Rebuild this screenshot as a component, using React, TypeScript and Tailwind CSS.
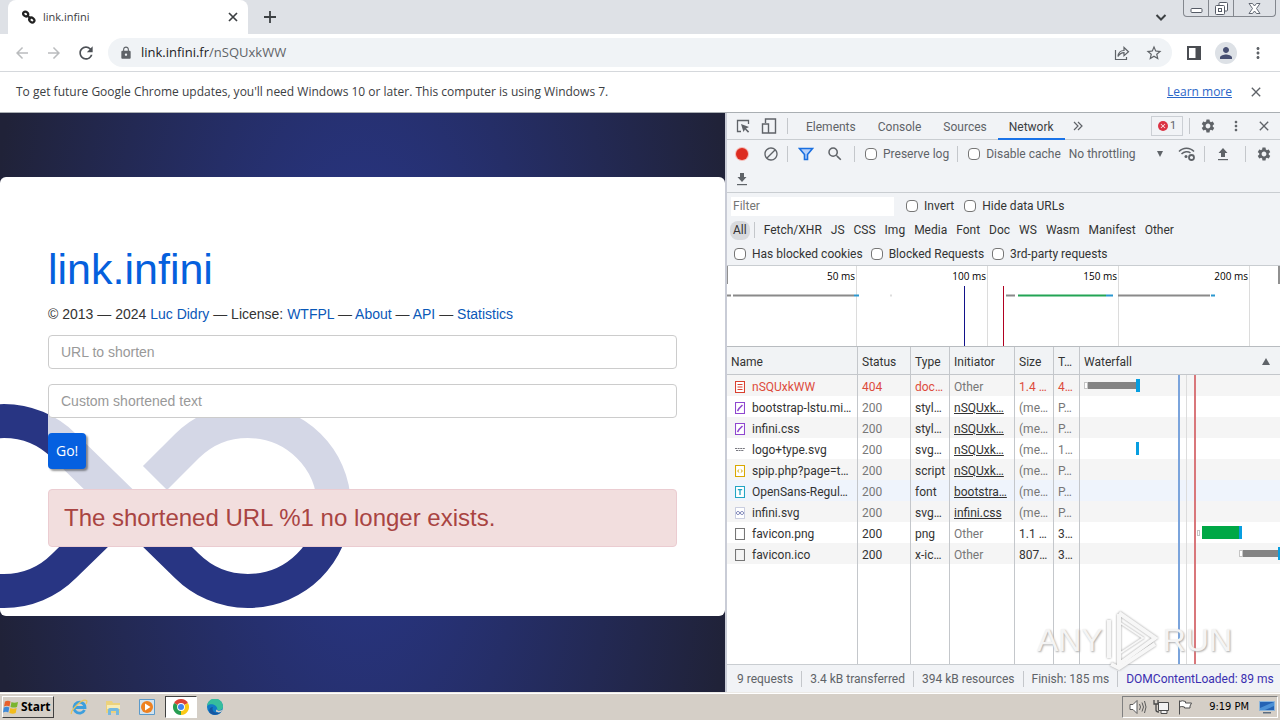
import { useState, type ReactNode } from "react";
import clsx from "clsx";
import {
  MdArrowBack,
  MdArrowForward,
  MdBlock,
  MdClose,
  MdLock,
  MdMoreVert,
  MdPerson,
  MdRefresh,
  MdSearch,
  MdSettings,
  MdStarBorder,
} from "react-icons/md";

type IconKind = "doc" | "css" | "logo" | "script" | "font" | "svg" | "blank";

type Bar = { start: number; wait: number; download: number; receiving?: boolean };

type RequestRow = {
  name: string;
  kind: IconKind;
  status: string;
  type: string;
  initiator: string;
  linked: boolean;
  size: string;
  time: string;
  dim: boolean;
  bar?: Bar;
};

const REQUESTS: RequestRow[] = [
  { name: "nSQUxkWW", kind: "doc", status: "404", type: "doc…", initiator: "Other", linked: false, size: "1.4 …", time: "4…", dim: false, bar: { start: 4, wait: 52, download: 4 } },
  { name: "bootstrap-lstu.mi…", kind: "css", status: "200", type: "styl…", initiator: "nSQUxk…", linked: true, size: "(me…", time: "P…", dim: true },
  { name: "infini.css", kind: "css", status: "200", type: "styl…", initiator: "nSQUxk…", linked: true, size: "(me…", time: "P…", dim: true },
  { name: "logo+type.svg", kind: "logo", status: "200", type: "svg…", initiator: "nSQUxk…", linked: true, size: "(me…", time: "1…", dim: true, bar: { start: 56, wait: 0, download: 3 } },
  { name: "spip.php?page=t…", kind: "script", status: "200", type: "script", initiator: "nSQUxk…", linked: true, size: "(me…", time: "P…", dim: true },
  { name: "OpenSans-Regul…", kind: "font", status: "200", type: "font", initiator: "bootstra…", linked: true, size: "(me…", time: "P…", dim: true },
  { name: "infini.svg", kind: "svg", status: "200", type: "svg…", initiator: "infini.css", linked: true, size: "(me…", time: "P…", dim: true },
  { name: "favicon.png", kind: "blank", status: "200", type: "png", initiator: "Other", linked: false, size: "1.1 …", time: "3…", dim: false, bar: { start: 117, wait: 41, download: 3, receiving: true } },
  { name: "favicon.ico", kind: "blank", status: "200", type: "x-ic…", initiator: "Other", linked: false, size: "807…", time: "3…", dim: false, bar: { start: 159, wait: 39, download: 3 } },
];

const TYPES = ["Fetch/XHR", "JS", "CSS", "Img", "Media", "Font", "Doc", "WS", "Wasm", "Manifest", "Other"];

const cellCls = "whitespace-nowrap border-r border-[#c4c7cb] pt-0.5 pl-1 text-left font-normal";

function Check({ label }: { label: string }) {
  return (
    <label className="flex items-center gap-1.5 whitespace-nowrap">
      <input type="checkbox" className="size-3 appearance-none rounded-sm border border-[#767676] bg-white checked:bg-[#1a73e8]" />
      {label}
    </label>
  );
}

function IconButton({ label, className, children }: { label: string; className?: string; children: ReactNode }) {
  return (
    <button type="button" aria-label={label} className={clsx("flex shrink-0 items-center justify-center", className)}>
      {children}
    </button>
  );
}

function Divider() {
  return <span className="h-4 w-px shrink-0 bg-[#c4c7cb]" />;
}

function ArrowTray({ up }: { up?: boolean }) {
  return (
    <svg viewBox="0 0 12 14" className="h-3.5 w-3" fill="#5f6368">
      {up ? <path d="M6 1l4.500 5H8v4H4V6H1.500z" /> : <path d="M6 10L1.500 5H4V1h4v4h2.500z" />}
      <path d="M1 12h10v1.200H1z" />
    </svg>
  );
}

function FileIcon({ kind }: { kind: IconKind }) {
  if (kind === "logo") {
    return (
      <svg viewBox="0 0 10 12" className="h-3 w-2.5 shrink-0" fill="none" stroke="#77777f">
        <path d="M0 4.500h10M1 6.500h8" strokeDasharray="2 .6" strokeWidth="1.200" />
      </svg>
    );
  }
  const stroke = { doc: "#d9402f", css: "#8f47cf", script: "#d9a800", font: "#22a5c4", svg: "#a9b0cf", blank: "#767676" }[kind];
  return (
    <svg viewBox="0 0 10 12" className="h-3 w-2.5 shrink-0" fill="none" stroke={stroke}>
      <path d="M.5.5h9v11h-9z" fill={kind === "blank" ? "none" : "#fff"} strokeWidth={kind === "svg" ? 0.6 : 1.1} />
      {kind === "doc" && <path d="M2.500 3.500h5M2.500 6h5M2.500 8.500h5" />}
      {kind === "css" && <path d="M2.500 9l1.500-2.500L7.500 3" strokeWidth="1.500" />}
      {kind === "script" && <path d="M4.200 4.500L2.500 6l1.700 1.500M5.800 4.500L7.500 6 5.800 7.500" />}
      {kind === "font" && <path d="M2.800 3.700h4.400M5 3.700V9" strokeWidth="1.300" />}
      {kind === "svg" && <path d="M5 6c-1-2-3.500-2-3.500 0s2.500 2 3.500 0 3.500-2 3.500 0-2.500 2-3.500 0z" stroke="#5c66a5" strokeWidth=".9" />}
    </svg>
  );
}

function TabStrip() {
  return (
    <div className="flex h-[34px] shrink-0 items-start bg-[#dee1e6] pl-2">
      <div className="flex h-full w-60 items-center rounded-t-lg bg-white pr-2.5 pl-3.5">
        <svg viewBox="0 0 14 14" className="size-3.5 shrink-0" fill="none" stroke="#222" strokeWidth="2.200">
          <ellipse cx="3.700" cy="4" rx="2.600" ry="2.200" transform="rotate(40 3.700 4)" />
          <ellipse cx="9.800" cy="10" rx="2.800" ry="2.200" transform="rotate(40 9.800 10)" />
          <path d="M5 5l4 4" />
        </svg>
        <span className="ml-[7px] flex-1 text-[11px] text-[#3c4043]">link.infini</span>
        <IconButton label="Close tab">
          <svg viewBox="0 0 10 10" className="size-2.5" stroke="#3c4043" strokeWidth="1.700"><path d="M1 1l8 8M9 1L1 9" /></svg>
        </IconButton>
      </div>
      <IconButton label="New tab" className="h-full w-11">
        <svg viewBox="0 0 12 12" className="size-3" stroke="#3c4043" strokeWidth="1.800"><path d="M6 0v12M0 6h12" /></svg>
      </IconButton>
      <div className="flex-1" />
      <IconButton label="Search tabs" className="h-full w-11">
        <svg viewBox="0 0 12 12" className="size-3" fill="none" stroke="#3c4043" strokeWidth="2"><path d="M1.500 4L6 8.500 10.500 4" /></svg>
      </IconButton>
      <div className="mr-1 flex h-[17px] w-[93px] overflow-hidden rounded-b border border-t-0 border-[#83878e]">
        <IconButton label="Minimize" className="w-[25px] border-r border-[#83878e]">
          <svg viewBox="0 0 13 13" className="size-[13px]" fill="#fff" stroke="#555b66"><rect x="1" y="6.500" width="11" height="4" rx="1" /></svg>
        </IconButton>
        <IconButton label="Restore" className="w-[25px] border-r border-[#83878e]">
          <svg viewBox="0 0 13 13" className="size-[13px]" fill="#fff" stroke="#555b66"><rect x="4" y=".5" width="8.500" height="8.500" rx="1" /><rect x=".5" y="3.500" width="9" height="9" rx="1" /><rect x="3.500" y="6.500" width="3" height="3" /></svg>
        </IconButton>
        <IconButton label="Close" className="flex-1">
          <svg viewBox="0 0 13 11" className="h-[11px] w-[13px]" fill="#fff" stroke="#555b66" strokeWidth=".9"><path d="M1 .5h3.500l2 2.500 2-2.500H12L8.500 5.500 12 10.500H8.500l-2-2.500-2 2.500H1l3.500-5z" /></svg>
        </IconButton>
      </div>
    </div>
  );
}

function AddressBar() {
  return (
    <div className="flex h-[38px] shrink-0 items-center border-b border-[#d5d8dc] bg-white pr-1.5 pl-1.5 text-[#5f6368]">
      <IconButton label="Back" className="size-8"><MdArrowBack className="size-[18px] text-[#babcbe]" /></IconButton>
      <IconButton label="Forward" className="size-8"><MdArrowForward className="size-[18px] text-[#babcbe]" /></IconButton>
      <IconButton label="Reload" className="size-8"><MdRefresh className="size-5 text-[#4d5156]" /></IconButton>
      <div className="ml-1.5 flex h-[29px] min-w-0 flex-1 items-center rounded-full bg-[#f0f3f6] pr-0.5 pl-[11px]">
        <MdLock className="size-3.5 shrink-0" />
        <div className="ml-2 flex-1 text-[13px]">
          <span className="text-[#202124]">link.infini.fr</span>/nSQUxkWW
        </div>
        <IconButton label="Share" className="size-8">
          <svg viewBox="0 0 16 16" className="size-4" fill="none" stroke="#5f6368" strokeWidth="1.200"><path d="M1.500 5v9.500h11V12M4 11.500C4.300 8 6 5.500 10 5.500V2.500l4.500 4.200-4.500 4v-3C7.500 7.700 5.500 9 4 11.500z" /></svg>
        </IconButton>
        <IconButton label="Bookmark" className="size-8"><MdStarBorder className="size-[18px]" /></IconButton>
      </div>
      <IconButton label="Side panel" className="ml-1.5 size-8">
        <svg viewBox="0 0 14 14" className="size-3.5" fill="#4a4d52"><path d="M0 0h14v14H0zM2 2v10h6.500V2z" fillRule="evenodd" /></svg>
      </IconButton>
      <IconButton label="Profile" className="size-8">
        <span className="flex size-[22px] items-center justify-center rounded-full bg-[#dde1e6]"><MdPerson className="size-[18px] text-[#474f72]" /></span>
      </IconButton>
      <IconButton label="Menu" className="size-8"><MdMoreVert className="size-[18px]" /></IconButton>
    </div>
  );
}

function InfoBar() {
  return (
    <div className="flex h-[41px] shrink-0 items-center border-b border-[#aaafb3] bg-white pr-4 pl-4 text-[12px] text-[#3c4043]">
      <p className="flex-1 whitespace-nowrap">To get future Google Chrome updates, you'll need Windows 10 or later. This computer is using Windows 7.</p>
      <a href="#learn" className="text-[#2a66c8] underline">Learn more</a>
      <IconButton label="Dismiss" className="ml-4"><MdClose className="size-4 text-[#5f6368]" /></IconButton>
    </div>
  );
}

function Infinity() {
  return (
    <svg viewBox="0 0 352 206" className="absolute bottom-[7px] left-0 h-[206px] w-[352px]" fill="none" stroke="#283583" strokeWidth="34">
      <path d="M-10 19.500Q0 18 4 18A85 85 0 0 1 64 43L187 163A86 85 0 1 0 187 43L155 75" />
      <path d="M-10 188H4A85 85 0 0 0 64 163L104 124" />
    </svg>
  );
}

function WebPage() {
  const inputCls = "h-[34px] w-full rounded border border-[#ccc] bg-white px-3 text-sm text-[#555] placeholder:text-[#999] focus:outline-none";
  return (
    <main className="min-w-0 flex-1 bg-[radial-gradient(ellipse_52%_150%_at_center,#283583_15%,#202238_100%)] pt-16 font-['Liberation_Sans',Arial,sans-serif]">
      <div className="relative overflow-hidden rounded-md bg-white px-12 pt-16 pb-[69px]">
        <Infinity />
        <div className="relative">
          <div className="bg-white/80">
            <h1 className="text-[43px] leading-[56px] text-[#0560dd]">link.infini</h1>
            <p className="pt-2 pb-3 text-sm leading-[18px] text-[#333]">
              © 2013 — 2024 <a href="#luc" className="text-[#0a58b8]">Luc Didry</a> — License: <a href="#wtfpl" className="text-[#0a58b8]">WTFPL</a> — <a href="#about" className="text-[#0a58b8]">About</a> — <a href="#api" className="text-[#0a58b8]">API</a> — <a href="#stats" className="text-[#0a58b8]">Statistics</a>
            </p>
            <form className="flex flex-col items-start gap-[15px] pb-5" onSubmit={(e) => e.preventDefault()}>
              <input aria-label="URL to shorten" placeholder="URL to shorten" className={inputCls} />
              <input aria-label="Custom shortened text" placeholder="Custom shortened text" className={inputCls} />
              <button type="submit" className="h-9 rounded bg-[#0560e0] px-2 font-['Open_Sans',sans-serif] text-sm text-white shadow-[2px_2px_2px_#00000066]">Go!</button>
            </form>
          </div>
          <div role="alert" className="rounded border border-[#ebccd1] bg-[#f2dede] px-[15px] py-[13px] text-2xl leading-[30px] text-[#a94442]">
            The shortened URL %1 no longer exists.
          </div>
        </div>
      </div>
    </main>
  );
}

function DevtoolsTabs() {
  const [active, setActive] = useState("Network");
  return (
    <div className="flex h-[27px] shrink-0 items-center border-b border-[#c9cdd1] pr-2 pl-2 text-[#5f6368]">
      <IconButton label="Inspect" className="size-4">
        <svg viewBox="0 0 16 16" className="size-4" fill="none" stroke="#5f6368" strokeWidth="1.300"><path d="M6 13.500H2.500v-11h11V6" /><path d="M6 6l8 3-3 1.500 3.200 3-1.200 1.200-3-3.200L8.500 14z" fill="#5f6368" stroke="none" /></svg>
      </IconButton>
      <IconButton label="Device toolbar" className="mr-2.5 ml-2.5 size-4">
        <svg viewBox="0 0 16 16" className="size-4" fill="none" stroke="#5f6368" strokeWidth="1.400"><path d="M4.500 5V1h10v14H8" /><path d="M1.500 6h6v9h-6z" /></svg>
      </IconButton>
      <Divider />
      <div className="ml-[7px] flex h-full">
        {["Elements", "Console", "Sources", "Network"].map((tab) => (
          <button
            key={tab}
            type="button"
            onClick={() => setActive(tab)}
            className={clsx("h-[27px] border-b-2 px-[11px] pt-0.5", active === tab ? "border-[#1a73e8] text-[#3c4043]" : "border-transparent")}
          >
            {tab}
          </button>
        ))}
      </div>
      <IconButton label="More tabs" className="ml-2">
        <svg viewBox="0 0 10 10" className="size-2.5" fill="none" stroke="#5f6368" strokeWidth="1.200"><path d="M1 1l4 4-4 4M5 1l4 4-4 4" /></svg>
      </IconButton>
      <div className="flex-1" />
      <button type="button" className="mr-1.5 flex h-5 w-8 items-center justify-center gap-0.5 border border-[#cbcfd4] text-[11px]">
        <span className="flex size-2.5 items-center justify-center rounded-full bg-[#db3344] text-white"><MdClose className="size-2" /></span>1
      </button>
      <Divider />
      <IconButton label="Settings" className="ml-2.5"><MdSettings className="size-4" /></IconButton>
      <IconButton label="Customize" className="ml-3"><MdMoreVert className="size-4" /></IconButton>
      <IconButton label="Close DevTools" className="ml-3"><MdClose className="size-4" /></IconButton>
    </div>
  );
}

function NetworkToolbar() {
  return (
    <div className="shrink-0 border-b border-[#c9cdd1] text-[#5f6368]">
      <div className="flex h-[26px] items-center pt-px pr-2 pl-2">
        <IconButton label="Record" className="size-3.5"><span className="size-3 rounded-full bg-[#dd2c20] ring-1 ring-[#f4b9b4]" /></IconButton>
        <IconButton label="Clear" className="mr-2 ml-3.5">
          <MdBlock className="size-4" />
        </IconButton>
        <Divider />
        <IconButton label="Filter" className="mr-3 ml-2.5">
          <svg viewBox="0 0 16 14" className="h-3.5 w-4" fill="#b7d1fa" stroke="#1a6fe0" strokeWidth="1.600"><path d="M1.500 1.500h13L9.500 7.500v5h-3v-5z" /></svg>
        </IconButton>
        <IconButton label="Search" className="mr-2.5"><MdSearch className="size-[18px]" /></IconButton>
        <Divider />
        <div className="mr-2 ml-2.5"><Check label="Preserve log" /></div>
        <Divider />
        <div className="ml-2.5"><Check label="Disable cache" /></div>
        <label className="relative ml-2 flex items-center">
          <span className="sr-only">Throttling</span>
          <select className="w-[95px] appearance-none bg-transparent">
            <option>No throttling</option>
          </select>
          <svg viewBox="0 0 8 6" className="pointer-events-none absolute right-0 h-1.5 w-2" fill="#5f6368"><path d="M1 0h6L4 6z" /></svg>
        </label>
        <IconButton label="Network conditions" className="ml-3.5">
          <svg viewBox="0 0 18 16" className="h-4 w-[18px]" fill="none" stroke="#5f6368" strokeWidth="1.500"><path d="M1 5.500C5 1 12 1 16 5.500M3.500 8C6 5.500 10 5 12.500 7" /><circle cx="8" cy="10.500" r="1.500" fill="#5f6368" stroke="none" /><circle cx="13.500" cy="11.500" r="2.500" strokeWidth="1.800" /></svg>
        </IconButton>
        <div className="flex-1" />
        <Divider />
        <IconButton label="Import HAR" className="mr-4 ml-3"><ArrowTray up /></IconButton>
        <Divider />
        <IconButton label="Network settings" className="ml-2.5"><MdSettings className="size-4" /></IconButton>
      </div>
      <div className="flex h-[26px] items-center pl-[9px]">
        <IconButton label="Export HAR"><ArrowTray /></IconButton>
      </div>
    </div>
  );
}

function FilterBar() {
  return (
    <div className="shrink-0 border-b border-[#c9cdd1] text-[#333]">
      <div className="flex h-6 items-center gap-2.5 pt-0.5 pl-1">
        <input aria-label="Filter" placeholder="Filter" className="mr-0.5 h-[19px] w-[163px] bg-white px-0.5 placeholder:text-[#757575] focus:outline-none" />
        <Check label="Invert" />
        <Check label="Hide data URLs" />
      </div>
      <div className="flex h-6 items-center gap-[9px] pt-0.5 pl-[3px]">
        <div className="flex items-center gap-1">
          <button type="button" className="h-[19px] rounded-lg bg-[#d8dadd] px-[3px]">All</button>
          <Divider />
        </div>
        {TYPES.map((t) => (
          <button key={t} type="button">{t}</button>
        ))}
      </div>
      <div className="flex h-6 items-center gap-2 pt-0.5 pl-[7px]">
        <Check label="Has blocked cookies" />
        <Check label="Blocked Requests" />
        <Check label="3rd-party requests" />
      </div>
    </div>
  );
}

function Overview() {
  return (
    <svg className="h-[81px] w-full shrink-0 border-b border-[#b8bcc0] bg-white font-['Open_Sans',sans-serif] text-[10px]" role="img" aria-label="Request overview">
      <path d="M129.500 0v80M260.500 0v80M391.500 0v80M522.500 0v80" stroke="#dcdcdc" />
      <g fill="#000" textAnchor="end">
        <text x="128" y="14">50 ms</text>
        <text x="259" y="14">100 ms</text>
        <text x="390" y="14">150 ms</text>
        <text x="521" y="14">200 ms</text>
      </g>
      <g strokeWidth="2" stroke="#8a8a8a">
        <path d="M0 29.500h4M6 29.500h121M279 29.500h9M391 29.500h92" />
        <path d="M127 29.500h5M379 29.500h7M484 29.500h4" stroke="#2b97cf" />
        <path d="M291 29.500h88" stroke="#23a455" />
        <path d="M163 29.500h2" stroke="#ddd" />
      </g>
      <path d="M237.500 20v61" stroke="#12128a" />
      <path d="M276.500 20v61" stroke="#b00020" />
      <path d="M0 0h1v18H0zM551 0h3v18h-3z" fill="#909090" />
    </svg>
  );
}

function WaterfallBar({ bar }: { bar: Bar }) {
  return (
    <div className="flex items-center" style={{ paddingLeft: bar.start }}>
      {bar.wait > 0 && <span className={clsx("shrink-0 border border-[#c5c5c5] bg-white", bar.receiving ? "mr-0.5 h-1.5 w-[3px]" : "h-[7px] w-1")} />}
      <span className={clsx("shrink-0", bar.receiving ? "h-[13px] bg-[#00a846]" : "h-[7px] bg-[#848484]")} style={{ width: bar.wait && bar.wait - 4 }} />
      <span className="h-[13px] shrink-0 bg-[#079ee0]" style={{ width: bar.download }} />
    </div>
  );
}

function RequestTable() {
  return (
    <div className="relative min-h-0 flex-1 bg-white">
      <table className="h-full w-full table-fixed border-separate border-spacing-0">
        <colgroup>
          <col className="w-[131px]" />
          <col className="w-[53px]" />
          <col className="w-[39px]" />
          <col className="w-[65px]" />
          <col className="w-[39px]" />
          <col className="w-[26px]" />
          <col />
        </colgroup>
        <thead>
          <tr className="h-7 bg-[#f1f3f5] text-[#333]">
            {["Name", "Status", "Type", "Initiator", "Size", "T…"].map((h) => (
              <th key={h} className={clsx(cellCls, "border-b")}>{h}</th>
            ))}
            <th className="border-b border-[#c4c7cb] pt-0.5 pr-2.5 pl-1 font-normal">
              <span className="flex items-center justify-between">
                Waterfall
                <svg viewBox="0 0 8 7" className="h-[7px] w-2" fill="#5f6368"><path d="M4 0l4 7H0z" /></svg>
              </span>
            </th>
          </tr>
        </thead>
        <tbody>
          {REQUESTS.map((r) => {
            const failed = r.status === "404";
            return (
              <tr
                key={r.name}
                className={clsx(
                  "h-[21px] odd:bg-[#f5f5f5]",
                  r.kind === "font" && "bg-[#eff4fc]",
                  failed ? "text-[#dd4b3c]" : "text-[#333]"
                )}
              >
                <td className={clsx(cellCls, "pl-2")}>
                  <div className="flex items-center gap-[7px]">
                    <FileIcon kind={r.kind} />
                    {r.name}
                  </div>
                </td>
                <td className={clsx(cellCls, r.dim && "text-[#777]")}>{r.status}</td>
                <td className={cellCls}>{r.type}</td>
                <td className={clsx(cellCls, !r.linked && "text-[#777]")}>
                  {r.linked ? <a href="#source" className="underline">{r.initiator}</a> : r.initiator}
                </td>
                <td className={clsx(cellCls, r.dim && "text-[#777]")}>{r.size}</td>
                <td className={clsx(cellCls, r.dim && "text-[#777]")}>{r.time}</td>
                <td className="overflow-hidden">{r.bar && <WaterfallBar bar={r.bar} />}</td>
              </tr>
            );
          })}
          <tr>
            {[0, 1, 2, 3, 4, 5].map((n) => <td key={n} className={cellCls} />)}
            <td />
          </tr>
        </tbody>
      </table>
      {/* load event markers run the full height of the waterfall column */}
      <div className="pointer-events-none absolute top-7 bottom-0 left-[451px] flex gap-1.5">
        <span className="w-0.5 bg-[#7ba4dc]" />
        <span className="mr-px w-px bg-[#dcdcdc]" />
        <span className="w-0.5 bg-[#d9777b]" />
      </div>
      <div className="pointer-events-none absolute right-12 -bottom-2 flex items-center gap-0.5 font-['Liberation_Sans',Arial,sans-serif] text-[32px] leading-[64px] text-[#f4f4f4] [text-shadow:1px_1px_2px_#aaaaaa]">
        ANY
        <svg viewBox="0 0 56 64" className="h-16 w-14 drop-shadow-[0_0_1px_#999]" fill="none" stroke="#f7f7f7" strokeWidth="4">
          <path d="M4 50V12M14 6v50l36-26L14 5" />
          <path d="M14 14v32l24-16z" strokeWidth="2" />
          <path d="M6 56l8 4 36-24" />
        </svg>
        RUN
      </div>
    </div>
  );
}

function Devtools() {
  return (
    <aside className="flex w-[555px] shrink-0 flex-col overflow-hidden border-l-2 border-[#c9ccd6] bg-[#f1f3f6] font-[Roboto,'Open_Sans',sans-serif] text-[12px] leading-4">
      <DevtoolsTabs />
      <NetworkToolbar />
      <FilterBar />
      <Overview />
      <RequestTable />
      <footer className="flex h-7 shrink-0 items-center gap-2 overflow-hidden border-t border-[#c9cdd1] pl-2.5 whitespace-nowrap text-[#5f6368]">
        <span>9 requests</span>
        <Divider />
        <span>3.4 kB transferred</span>
        <Divider />
        <span>394 kB resources</span>
        <Divider />
        <span>Finish: 185 ms</span>
        <Divider />
        <span className="text-[#3a2fb0]">DOMContentLoaded: 89 ms</span>
      </footer>
    </aside>
  );
}

function Taskbar() {
  return (
    <footer className="flex h-7 shrink-0 items-center border-t border-[#eceae6] bg-[#d5cfc7] pt-px pl-0.5 font-['DejaVu_Sans_Condensed','DejaVu_Sans',sans-serif] text-[11px] text-black shadow-[inset_0_1px_0_#ffffff]">
      <button type="button" className="flex h-[22px] w-[52px] items-center gap-0.5 border border-t-white border-r-[#404040] border-b-[#404040] border-l-white text-xs font-bold">
        <svg viewBox="0 0 16 16" className="size-4 shrink-0">
          <path d="M2 2.500Q5 1 7.500 2.500L6.500 7.500Q4 6 1 7.500z" fill="#e8602c" />
          <path d="M8.500 3Q11 4.500 15 3l-1 5Q11 9 7.500 8z" fill="#7ab52e" />
          <path d="M.8 8.500Q4 7 6.300 8.500L5.300 13.500Q3 12 0 13.500z" fill="#3f8ad8" />
          <path d="M7.300 9Q10 10.500 13.700 9l-1 5Q10 15.500 6.300 14z" fill="#f2bc1c" />
        </svg>
        <span className="font-['Noto_Sans',sans-serif]">Start</span>
      </button>
      <div className="ml-[9px] flex items-center gap-0.5">
        <IconButton label="Internet Explorer" className="h-[22px] w-8">
          <svg viewBox="0 0 18 18" className="size-[18px]" fill="none"><path d="M14.500 12A5.500 5.500 0 1 1 15 9.500H4" stroke="#3d9fdd" strokeWidth="2.800" /><path d="M1.500 16C0 13 12 0 16.500 2.500c.8.800.3 2-.5 3.500" stroke="#eac55c" strokeWidth="1.300" /></svg>
        </IconButton>
        <IconButton label="Explorer" className="h-[22px] w-8">
          <svg viewBox="0 0 18 18" className="size-[18px]"><path d="M2 3h6l1 2h7v10H2z" fill="#ecd27c" /><path d="M3 7h13v4H3z" fill="#f8ecb5" /><path d="M4 17v-5q0-2 2-2h7q2 0 2 2v5h-3v-4H7v4z" fill="#75b9df" /></svg>
        </IconButton>
        <IconButton label="Media Player" className="h-[22px] w-8">
          <svg viewBox="0 0 18 18" className="size-[18px]"><path d="M1.500 1.500h15v15h-15z" fill="#d2e3ef" stroke="#5b9aca" /><circle cx="9" cy="9" r="6" fill="#ee8120" /><path d="M7 5.500v7L12.500 9z" fill="#fff" /></svg>
        </IconButton>
        <IconButton label="Chrome" className="h-[22px] w-8 border border-t-[#404040] border-r-white border-b-white border-l-[#404040] bg-white">
          <svg viewBox="0 0 16 16" className="size-4"><path d="M8 8L1.070 4A8 8 0 0 1 14.930 4z" fill="#dc4437" /><path d="M8 8l6.930-4A8 8 0 0 1 8 16z" fill="#fbc916" /><path d="M8 8v8A8 8 0 0 1 1.070 4z" fill="#279d52" /><circle cx="8" cy="8" r="3.900" fill="#fff" /><circle cx="8" cy="8" r="3" fill="#4084f0" /></svg>
        </IconButton>
        <IconButton label="Edge" className="h-[22px] w-8">
          <svg viewBox="0 0 16 16" className="size-4"><circle cx="8" cy="8" r="8" fill="#117bc6" /><path d="M0 7A8 8 0 0 1 16 8c0 3-4 4-6 2.500C11.500 7 4 3 0 7z" fill="#36bd9d" /><path d="M6 8c-2 4 2 7.500 8 5-2 3-8 4-11 1C1 11 3 8 6 8z" fill="#1556a2" /><path d="M9.500 10.500c1.500 2 4 1.500 6 .3-.5 1-1 1.700-1.700 2.200-3 1-6 0-4.300-2.500z" fill="#d5cfc7" /></svg>
        </IconButton>
      </div>
      <div className="flex-1" />
      <div className="mr-0.5 flex h-[22px] items-center border border-t-[#808080] border-r-white border-b-white border-l-[#808080] pr-0.5 pl-1.5">
        <svg viewBox="0 0 18 16" className="mr-1.5 h-4 w-[18px]" fill="#fff" stroke="#5a5a5a"><path d="M1 5.500h3l4-4v13l-4-4H1z" /><path d="M10.500 5q2 3 0 6M13 3.500q3 4.500 0 9M15.500 2q3 6 0 12" fill="none" /></svg>
        <svg viewBox="0 0 16 16" className="mr-2 size-4" fill="#f2f2f2" stroke="#4a4a4a"><path d="M5.500 3.500h10v8h-10zM8 11.500v3h6v-3" /><path d="M1 1v4h4V1M3 5v6q0 2 3 2" fill="none" strokeWidth="1.300" /></svg>
        <svg viewBox="0 0 16 16" className="mr-4 size-4" fill="#fff" stroke="#4f4f4f"><path d="M2.500 1.500v14M2.500 2.500q3-1.500 6 0v1.500h6l-1.500 3 0 2H7.500V8q-3-1-5 0" /></svg>
        <span className="mr-2.5">9:19 PM</span>
        <svg viewBox="0 0 16 14" className="h-3.5 w-4"><path d="M.5 1.500h15v9H.5z" fill="#2563b4" stroke="#8db6dc" /><path d="M1 8L15 2v4L6 10H1z" fill="#4c91d6" /><path d="M4 12h8v1.500H4z" fill="#5c6d80" /></svg>
      </div>
    </footer>
  );
}

export default function App() {
  return (
    <div className="flex h-screen flex-col overflow-hidden bg-white font-['Open_Sans','Noto_Sans',sans-serif]">
      <TabStrip />
      <AddressBar />
      <InfoBar />
      <div className="flex min-h-0 flex-1">
        <WebPage />
        <Devtools />
      </div>
      <Taskbar />
    </div>
  );
}
